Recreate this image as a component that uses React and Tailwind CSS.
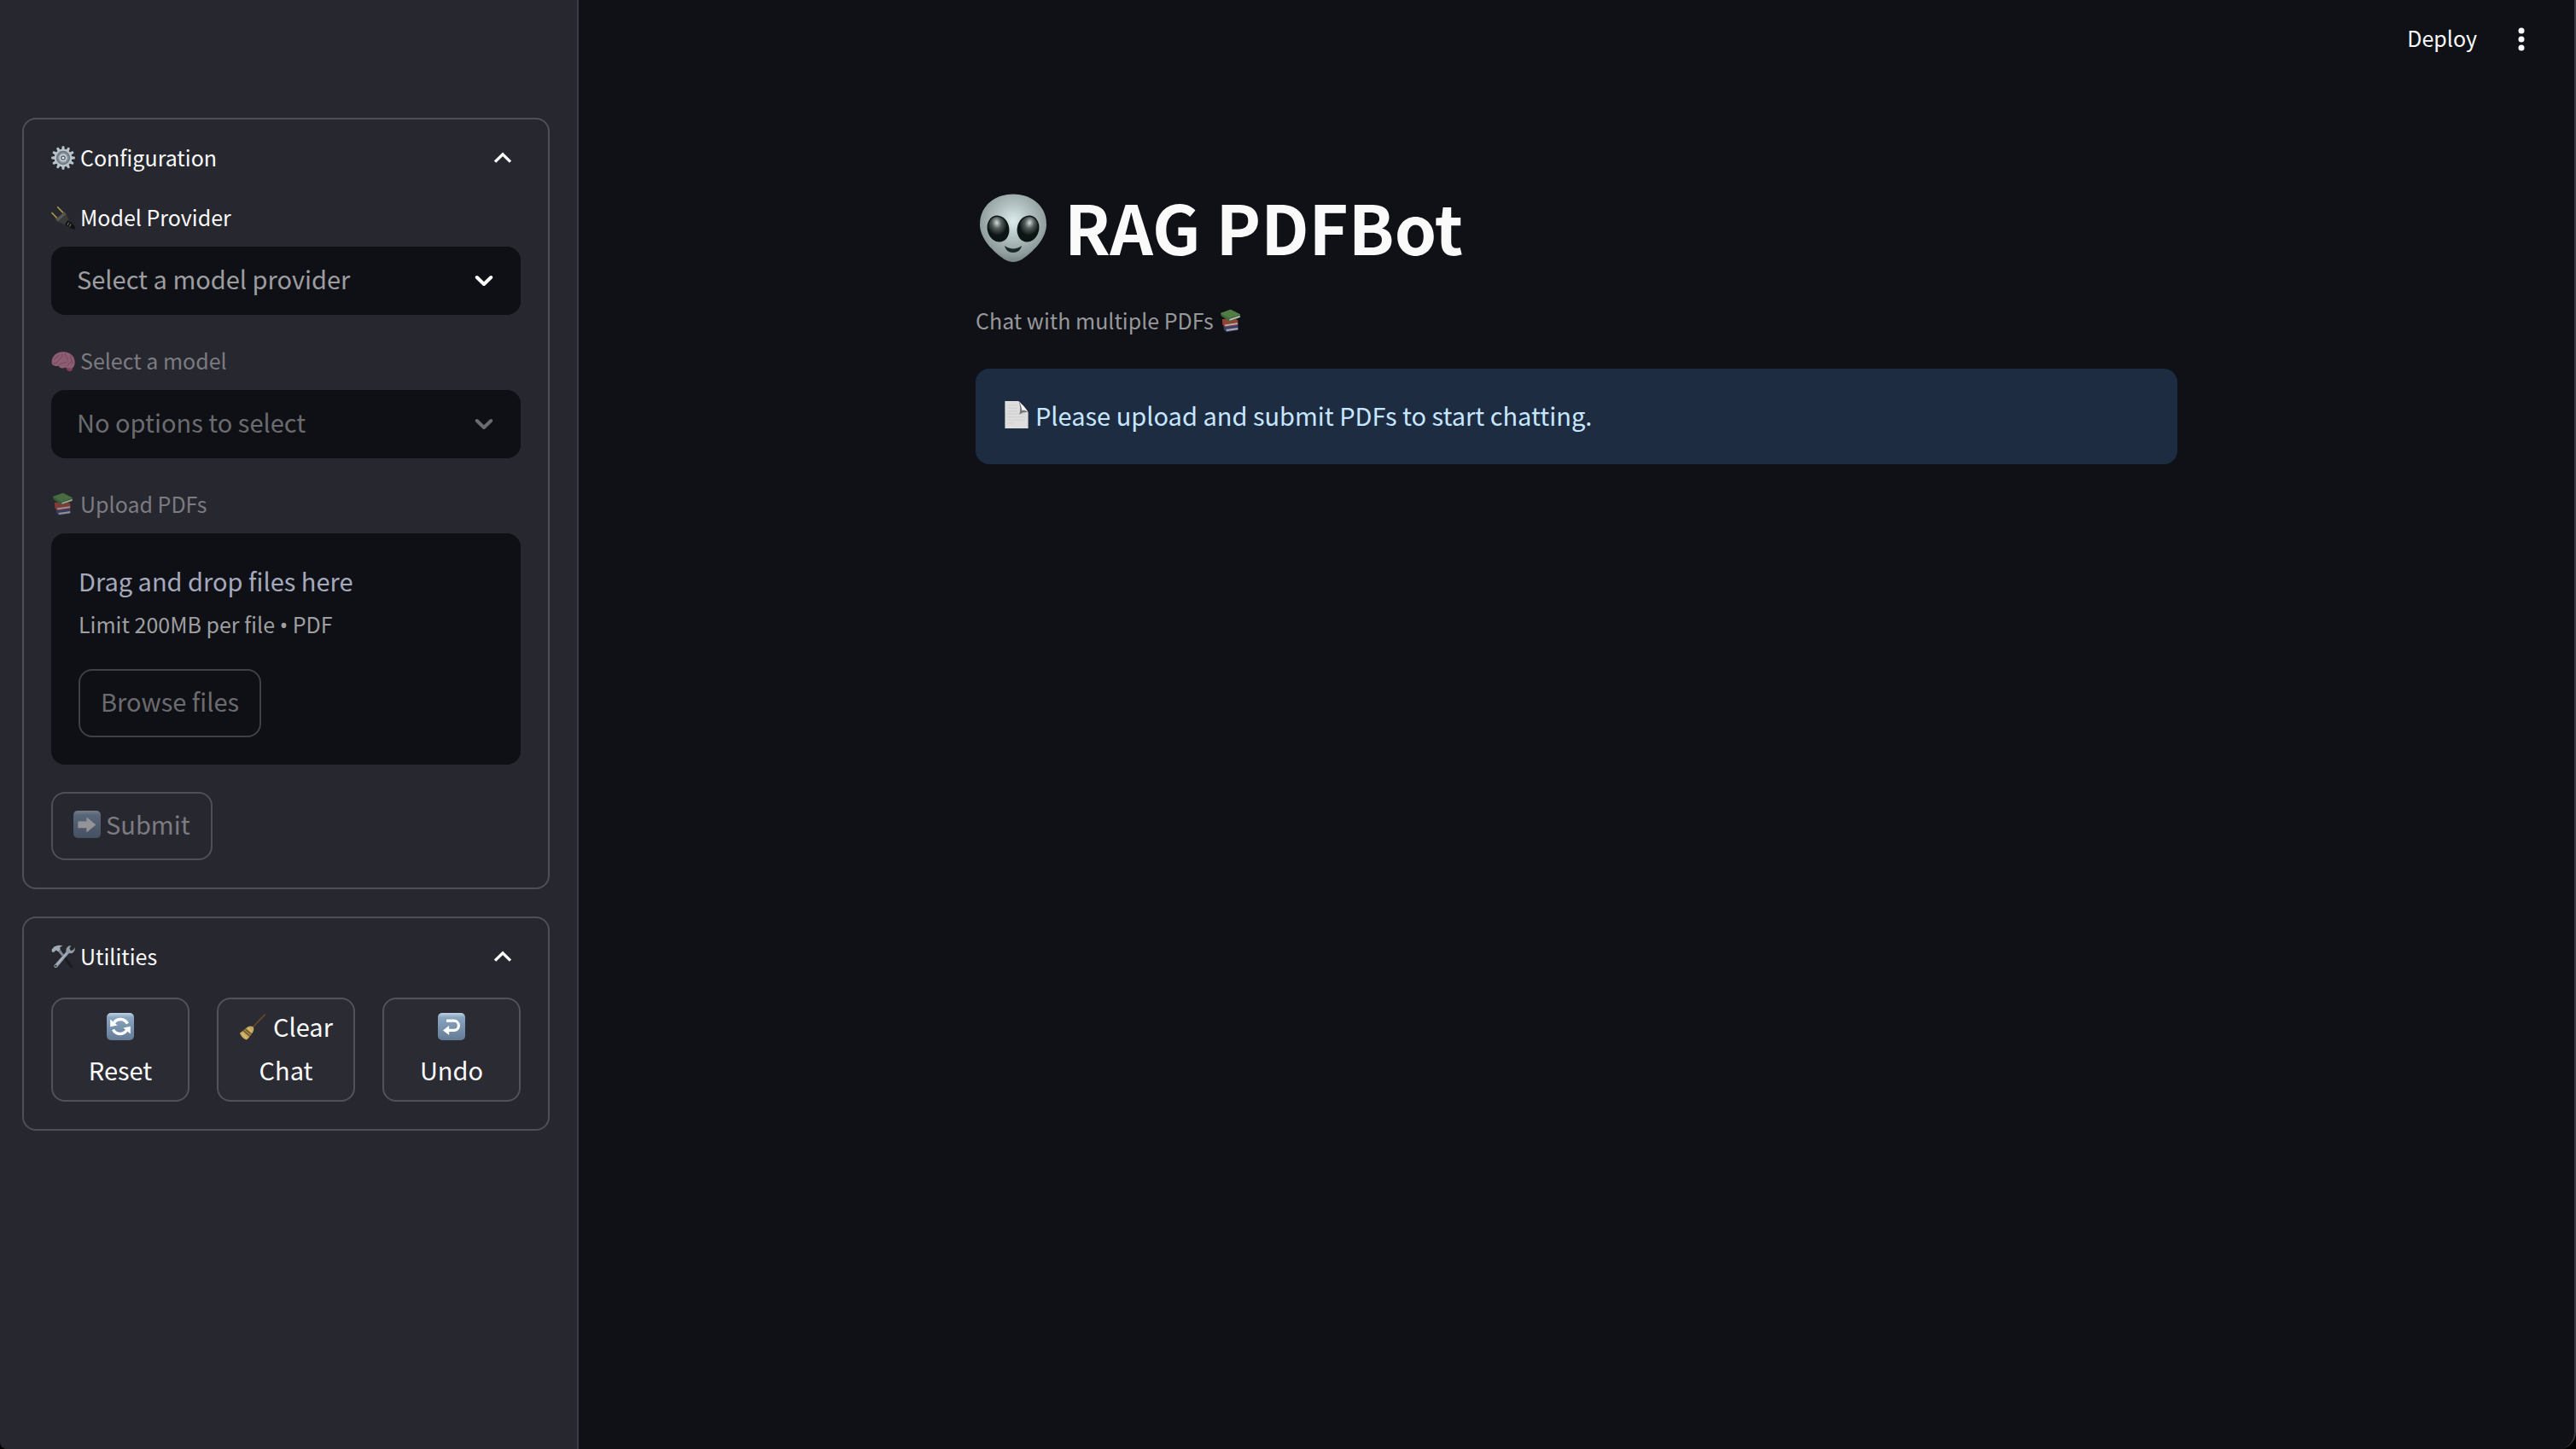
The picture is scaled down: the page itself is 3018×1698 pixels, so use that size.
import React from "react";

function Svg({ size, children, className = "", box = 32 }) {
  return (
    <svg aria-hidden="true" width={size} height={size} viewBox={`0 0 ${box} ${box}`} className={`shrink-0 ${className}`}>
      {children}
    </svg>
  );
}

function Gear() {
  const teeth = Array.from({ length: 12 }, (_, i) => i * 30);
  return (
    <Svg size={28}>
      {teeth.map((a) => (
        <path key={a} d="M13.8 5 L14.6 0.2 H17.4 L18.2 5 Z" fill="#b9c3cc" transform={`rotate(${a} 16 16)`} />
      ))}
      <circle cx="16" cy="16" r="10.6" fill="#6f7880" stroke="#b9c3cc" strokeWidth="2.6" />
      <circle cx="16" cy="16" r="7.4" fill="#8a939b" />
      <circle cx="16" cy="16" r="4.2" fill="#4c545c" stroke="#c9d2da" strokeWidth="2" />
      <circle cx="16" cy="16" r="1.8" fill="#dfe6ec" />
    </Svg>
  );
}

function Plug() {
  return (
    <Svg size={28}>
      <path d="M0.6 9.2 L8 17 M8.2 1.4 L16 9.6" stroke="#ad974b" strokeWidth="1.8" />
      <path d="M5.6 18.4 L17.6 8.2 L20.4 11.6 L23.8 20 L21.6 23.6 L17.8 25.6 L9.4 21.6 Z" fill="#3a3a39" />
      <path d="M6 18.4 L17.6 8.6 L20 11.4 L8.6 21.2 Z" fill="#565655" />
      <path d="M22 19.6 L27.4 23 L31.6 27.4 V32 L25.6 29.6 L18.4 25 Z" fill="#111111" />
      <path d="M23.6 22.6 L21.6 26 M26.4 24.6 L24.4 28" stroke="#777777" strokeWidth="1.2" />
    </Svg>
  );
}

function Brain() {
  return (
    <Svg size={28}>
      <path d="M20 26 C20 24 27 22.6 28.6 25 C29 29 25.6 30.4 23.4 29.8 C21.4 29.2 20.4 27.6 20 26 Z" fill="#7b3f55" />
      <path d="M0.6 18 C0.6 9 7.6 3.6 16 3.6 C25.4 3.6 31.6 9.6 31.6 17.4 C31.6 23 29.6 25.8 26.4 25.8 C23 26.2 21 24.4 18 25 C14 26.4 11 25.6 10 22.6 C6 23.4 0.8 22.4 0.6 18 Z" fill="#8d5d73" />
      <path d="M4 14 C6 10 9 12 10 8 M10 15 C12 11 15 13 15 7 M19 6 C18 11 23 10 22 14 M26 9 C25 13 29 14 28 19 M10 22 C12 18 17 20 21 17 M3 19 C6 20 8 18 9 16 M22 22 C24 19 25 20 26 17" fill="none" stroke="#6e4055" strokeWidth="1" strokeLinecap="round" />
    </Svg>
  );
}

function Books({ className = "" }) {
  return (
    <Svg size={28} className={className}>
      <path d="M6 22 L23 20.4 L25.8 22 V28.4 L10 31 L7 28 Z" fill="#3a3f6e" />
      <path d="M9.6 27.4 L25.4 25.2 V27.6 L10.6 29.8 Z" fill="#a9a9a7" />
      <path d="M4.4 13.6 L22 13 L25.6 15 V21.6 L8.4 24.4 L5 21 Z" fill="#94413a" />
      <path d="M7.8 21 L25.2 18.6 V20.6 L8.4 23.2 Z" fill="#b4b3af" />
      <path d="M2.2 5.6 L15.6 0.8 L28.4 7.2 L29 11 L14.4 17 L3.2 9.4 Z" fill="#3f6a38" />
      <path d="M2.2 5.6 L15.6 0.8 L28.4 7.2 L14 12.4 Z" fill="#527d47" />
      <path d="M14.2 13.8 L28 9 V11 L14.4 15.8 Z" fill="#c4c4c0" />
    </Svg>
  );
}

function Tools() {
  return (
    <Svg size={28}>
      <path d="M9 7 L11.4 5.4 L29 30 L26.4 31.2 Z" fill="#1a1b1f" />
      <path d="M8.6 8.4 L11.6 6 L17 13.4 L14.6 15.8 Z" fill="#7d8891" />
      <path d="M1 9.6 L0.6 6.6 L4.2 2.6 L9.4 0.8 L15.4 1 L11.6 3.6 L12.2 6.2 L9 9.2 L6.4 7.4 L3.4 10.4 Z" fill="#9fabb5" />
      <path d="M26.6 1.4 L24.4 5.2 L26.4 8.2 L29.8 6.8 L31.4 3.4 L31.6 7.8 L28.4 11.4 L23.6 11.8 L8.6 29.4 C7 32 3.2 31 3.8 27.6 L19.8 9.6 L20.2 4.8 L23.4 1.6 Z" fill="#929da7" />
      <circle cx="6.2" cy="28.4" r="1.2" fill="#272730" />
      <path d="M8 26 L20.4 11.6" stroke="#c7cfd6" strokeWidth="1" />
    </Svg>
  );
}

function Tile({ id, children }) {
  return (
    <Svg size={32}>
      <defs>
        <linearGradient id={id} x1="0" y1="0" x2="0" y2="1">
          <stop offset="0" stopColor="#c3d3e2" />
          <stop offset="0.16" stopColor="#8aa5c2" />
          <stop offset="1" stopColor="#647b95" />
        </linearGradient>
      </defs>
      <rect width="32" height="32" rx="5" fill={`url(#${id})`} />
      {children}
    </Svg>
  );
}

function ResetIcon() {
  return (
    <Tile id="tile-reset">
      <path d="M8.4 11.8 A9.2 9.2 0 0 1 24.4 12.6 M23.6 20.2 A9.2 9.2 0 0 1 7.6 19.4" fill="none" stroke="#fff" strokeWidth="3.4" />
      <path d="M4.2 7.6 V16.2 L12.6 14.4 Z M27.8 24.4 V15.8 L19.4 17.6 Z" fill="#fff" />
    </Tile>
  );
}

function UndoIcon() {
  return (
    <Tile id="tile-undo">
      <path d="M10 9.2 H18.8 A5.6 5.6 0 0 1 18.8 20.4 H12" fill="none" stroke="#fff" strokeWidth="3.2" />
      <path d="M6 20.4 L13.2 14.8 V26 Z" fill="#fff" />
    </Tile>
  );
}

function Broom() {
  return (
    <Svg size={32}>
      <path d="M16.4 16.4 L30.8 1.4" stroke="#744a26" strokeWidth="1.4" />
      <path d="M9.6 16.8 C12 15.2 15 15 16.6 16.4 C18 18 17.2 21.6 15.6 23.4 C13 26.8 11.6 29.6 8.8 31.4 C5.4 30.6 1.8 26.8 1 23.4 C4 22 7 19 9.6 16.8 Z" fill="#c4a85c" />
      <path d="M7 18.8 L14.6 25.2 M5 20.4 L12.8 27.2" stroke="#77572f" strokeWidth="1.8" />
      <path d="M3.6 24 L8.6 29.4 M10.6 17.6 L15 21.6" stroke="#e6d38d" strokeWidth="1" />
    </Svg>
  );
}

function PageIcon() {
  return (
    <Svg size={32}>
      <path d="M2.4 0 H18.4 L29.6 13 V32 H2.4 Z" fill="#dedede" />
      <path d="M5.6 5 H16 M5.6 8.4 H17 M5.6 11.8 H17 M5.6 15.2 H26 M5.6 18.6 H26 M5.6 22 H26 M5.6 26 H12" stroke="#d0d0d0" strokeWidth="1.2" />
      <path d="M18.4 0 C20.6 5 20.4 10 19.4 15.4 C22.6 13.4 26 12.6 29.6 13 Z" fill="#777" />
      <path d="M18.4 0 C22.4 3.6 27 8.4 29.6 13 C27 10.8 24.4 10.4 22.2 10.8 C22 7 20.8 3.4 18.4 0 Z" fill="#f4f4f4" />
    </Svg>
  );
}

function Alien() {
  return (
    <svg aria-hidden="true" width="80" height="80" viewBox="0 0 80 80" className="shrink-0">
      <defs>
        <radialGradient id="skin" cx="0.5" cy="0.4" r="0.58">
          <stop offset="0" stopColor="#dcecec" />
          <stop offset="0.4" stopColor="#b5c4c4" />
          <stop offset="0.85" stopColor="#919e9e" />
          <stop offset="1" stopColor="#7d8989" />
        </radialGradient>
        <radialGradient id="eye" cx="0.5" cy="0.26" r="0.5">
          <stop offset="0" stopColor="#d5dada" />
          <stop offset="0.45" stopColor="#545c5c" />
          <stop offset="1" stopColor="#0c1414" />
        </radialGradient>
      </defs>
      <path d="M40 0.5 C62 0.5 79 14.5 79 36 C79 54 61 69.5 51 76.5 C44 81 36 81 29 76.5 C19 69.5 1 54 1 36 C1 14.5 18 0.5 40 0.5 Z" fill="url(#skin)" />
      <ellipse cx="22.5" cy="41" rx="12" ry="15" transform="rotate(-14 22.5 41)" fill="url(#eye)" stroke="#0c1414" strokeWidth="1.5" />
      <ellipse cx="57.5" cy="41" rx="12" ry="15" transform="rotate(14 57.5 41)" fill="url(#eye)" stroke="#0c1414" strokeWidth="1.5" />
      <path d="M30 61 C36 65.6 44 65.6 50 61 C49 66 45 69 40 69 C35 69 31 66 30 61 Z" fill="#1c2828" />
    </svg>
  );
}

function ChevronDown({ className = "" }) {
  return (
    <svg aria-hidden="true" width="22" height="14" viewBox="0 0 22 14" className={`pointer-events-none shrink-0 ${className}`}>
      <path d="M2.8 3 L11 11 L19.2 3" fill="none" stroke="currentColor" strokeWidth="4" strokeLinecap="round" strokeLinejoin="round" />
    </svg>
  );
}

function ChevronUp() {
  return (
    <svg aria-hidden="true" width="22" height="14" viewBox="0 0 22 14" className="mr-2.5 shrink-0">
      <path d="M2 11.6 L11 2.8 L20 11.6" fill="none" stroke="currentColor" strokeWidth="3.4" />
    </svg>
  );
}

function Panel({ icon, title, children }) {
  return (
    <section className="rounded-2xl border-2 border-[#4f4f57]">
      <button type="button" aria-expanded="true" className="flex w-full items-center justify-between px-8 pt-[22px] pb-[26px] text-[25px] leading-[45px]">
        <span className="flex items-center gap-1.5">
          {icon}
          {title}
        </span>
        <ChevronUp />
      </button>
      <div className="flex flex-col gap-8 px-8 pb-8">{children}</div>
    </section>
  );
}

function FieldLabel({ icon, children, htmlFor, dim }) {
  return (
    <label htmlFor={htmlFor} className={`mb-2 flex h-12 items-center gap-1.5 pb-1 text-[25px] ${dim ? "text-[#7b7b80]" : ""}`}>
      {icon}
      {children}
    </label>
  );
}

function SelectField({ id, icon, label, placeholder, disabled }) {
  return (
    <div>
      <FieldLabel htmlFor={id} icon={icon} dim={disabled}>{label}</FieldLabel>
      <div className="grid items-center">
        <select
          id={id}
          disabled={disabled}
          className={`col-start-1 row-start-1 h-20 w-full appearance-none rounded-2xl bg-[#0f1015] px-[30px] pb-1 text-[29px] opacity-100 ${disabled ? "text-[#6b6b6f]" : "text-[#9d9da0]"}`}
        >
          <option>{placeholder}</option>
        </select>
        <ChevronDown className={`col-start-1 row-start-1 mr-8 justify-self-end ${disabled ? "text-[#6b6b6f]" : "text-white"}`} />
      </div>
    </div>
  );
}

function UtilityButton({ children }) {
  return (
    <button type="button" className="flex flex-1 flex-col items-center rounded-2xl border-2 border-[#52525a] bg-[#2b2b34] pt-1.5 pb-2.5 text-[29px] leading-[51px]">
      {children}
    </button>
  );
}

export default function App() {
  return (
    <div className="flex min-h-screen bg-black font-['Noto_Sans_CJK_SC',sans-serif] text-[#fafafa]">
      <aside className="flex w-[678px] shrink-0 flex-col gap-8 rounded-bl-lg border-r-2 border-[#3b3c43] bg-[#272730] pt-[138px] pr-8 pl-[26px]">
        <Panel icon={<Gear />} title="Configuration">
          <SelectField id="provider" icon={<Plug />} label="Model Provider" placeholder="Select a model provider" />
          <SelectField id="model" icon={<Brain />} label="Select a model" placeholder="No options to select" disabled />
          <div>
            <FieldLabel htmlFor="browse" icon={<Books className="opacity-80" />} dim>Upload PDFs</FieldLabel>
            <div className="rounded-2xl bg-[#0f1015] px-8 pt-[30px] pb-8">
              <p className="text-[29px] leading-[51px] text-[#a5a9bc]">Drag and drop files here</p>
              <p className="text-[25px] leading-[51px] text-[#9f9fa1]">
                Limit 200MB per file <span className="font-['Noto_Sans',sans-serif]">•</span> PDF
              </p>
              <button id="browse" type="button" disabled className="mt-[26px] h-20 rounded-2xl border-2 border-[#414145] px-6 pb-1 text-[29px] text-[#6b6b6f]">
                Browse files
              </button>
            </div>
          </div>
          <button type="button" disabled className="flex h-20 items-center gap-1.5 self-start rounded-2xl border-2 border-[#4f4f57] px-6 pb-1 text-[29px] text-[#7b7b80]">
            <span className="opacity-50">
              <Tile id="tile-submit">
                <path d="M5.4 12.6 H15.4 V7.4 L26.4 16.4 L15.4 25.4 V20.2 H5.4 Z" fill="#fff" />
              </Tile>
            </span>
            Submit
          </button>
        </Panel>
        <Panel icon={<Tools />} title="Utilities">
          <div className="flex gap-8">
            <UtilityButton>
              <span className="flex h-[51px] items-center"><ResetIcon /></span>
              <span>Reset</span>
            </UtilityButton>
            <UtilityButton>
              <span className="flex items-center gap-2"><Broom />Clear</span>
              <span>Chat</span>
            </UtilityButton>
            <UtilityButton>
              <span className="flex h-[51px] items-center"><UndoIcon /></span>
              <span>Undo</span>
            </UtilityButton>
          </div>
        </Panel>
      </aside>

      <div className="flex min-w-0 flex-1 flex-col rounded-br-[20px] border-r-2 border-[#3b3c43] bg-[#0f1116]">
        <header className="flex h-[92px] items-center justify-end gap-10 pr-[50px]">
          <button type="button" className="pb-0.5 text-[25px]">Deploy</button>
          <button type="button" aria-label="Main menu">
            <svg aria-hidden="true" width="24" height="28" viewBox="0 0 24 28">
              <circle cx="12" cy="4" r="3.5" fill="currentColor" />
              <circle cx="12" cy="14" r="3.5" fill="currentColor" />
              <circle cx="12" cy="24" r="3.5" fill="currentColor" />
            </svg>
          </button>
        </header>
        <main className="mx-auto w-full max-w-[1472px] px-8 pt-[122px]">
          <h1 className="flex h-[106px] items-center gap-5 px-1 text-[79px] font-bold">
            <Alien />
            <span className="pb-1">RAG PDFBot</span>
          </h1>
          <p className="mt-8 flex h-12 items-center gap-1.5 text-[25px] text-[#98989b]">
            Chat with multiple PDFs
            <Books />
          </p>
          <div role="alert" className="mt-8 flex items-center gap-1.5 rounded-2xl bg-[#1e2c41] px-8 pt-[30px] pb-[34px] text-[29px] leading-[48px] text-[#c7e6ff]">
            <PageIcon />
            Please upload and submit PDFs to start chatting.
          </div>
        </main>
      </div>
    </div>
  );
}
